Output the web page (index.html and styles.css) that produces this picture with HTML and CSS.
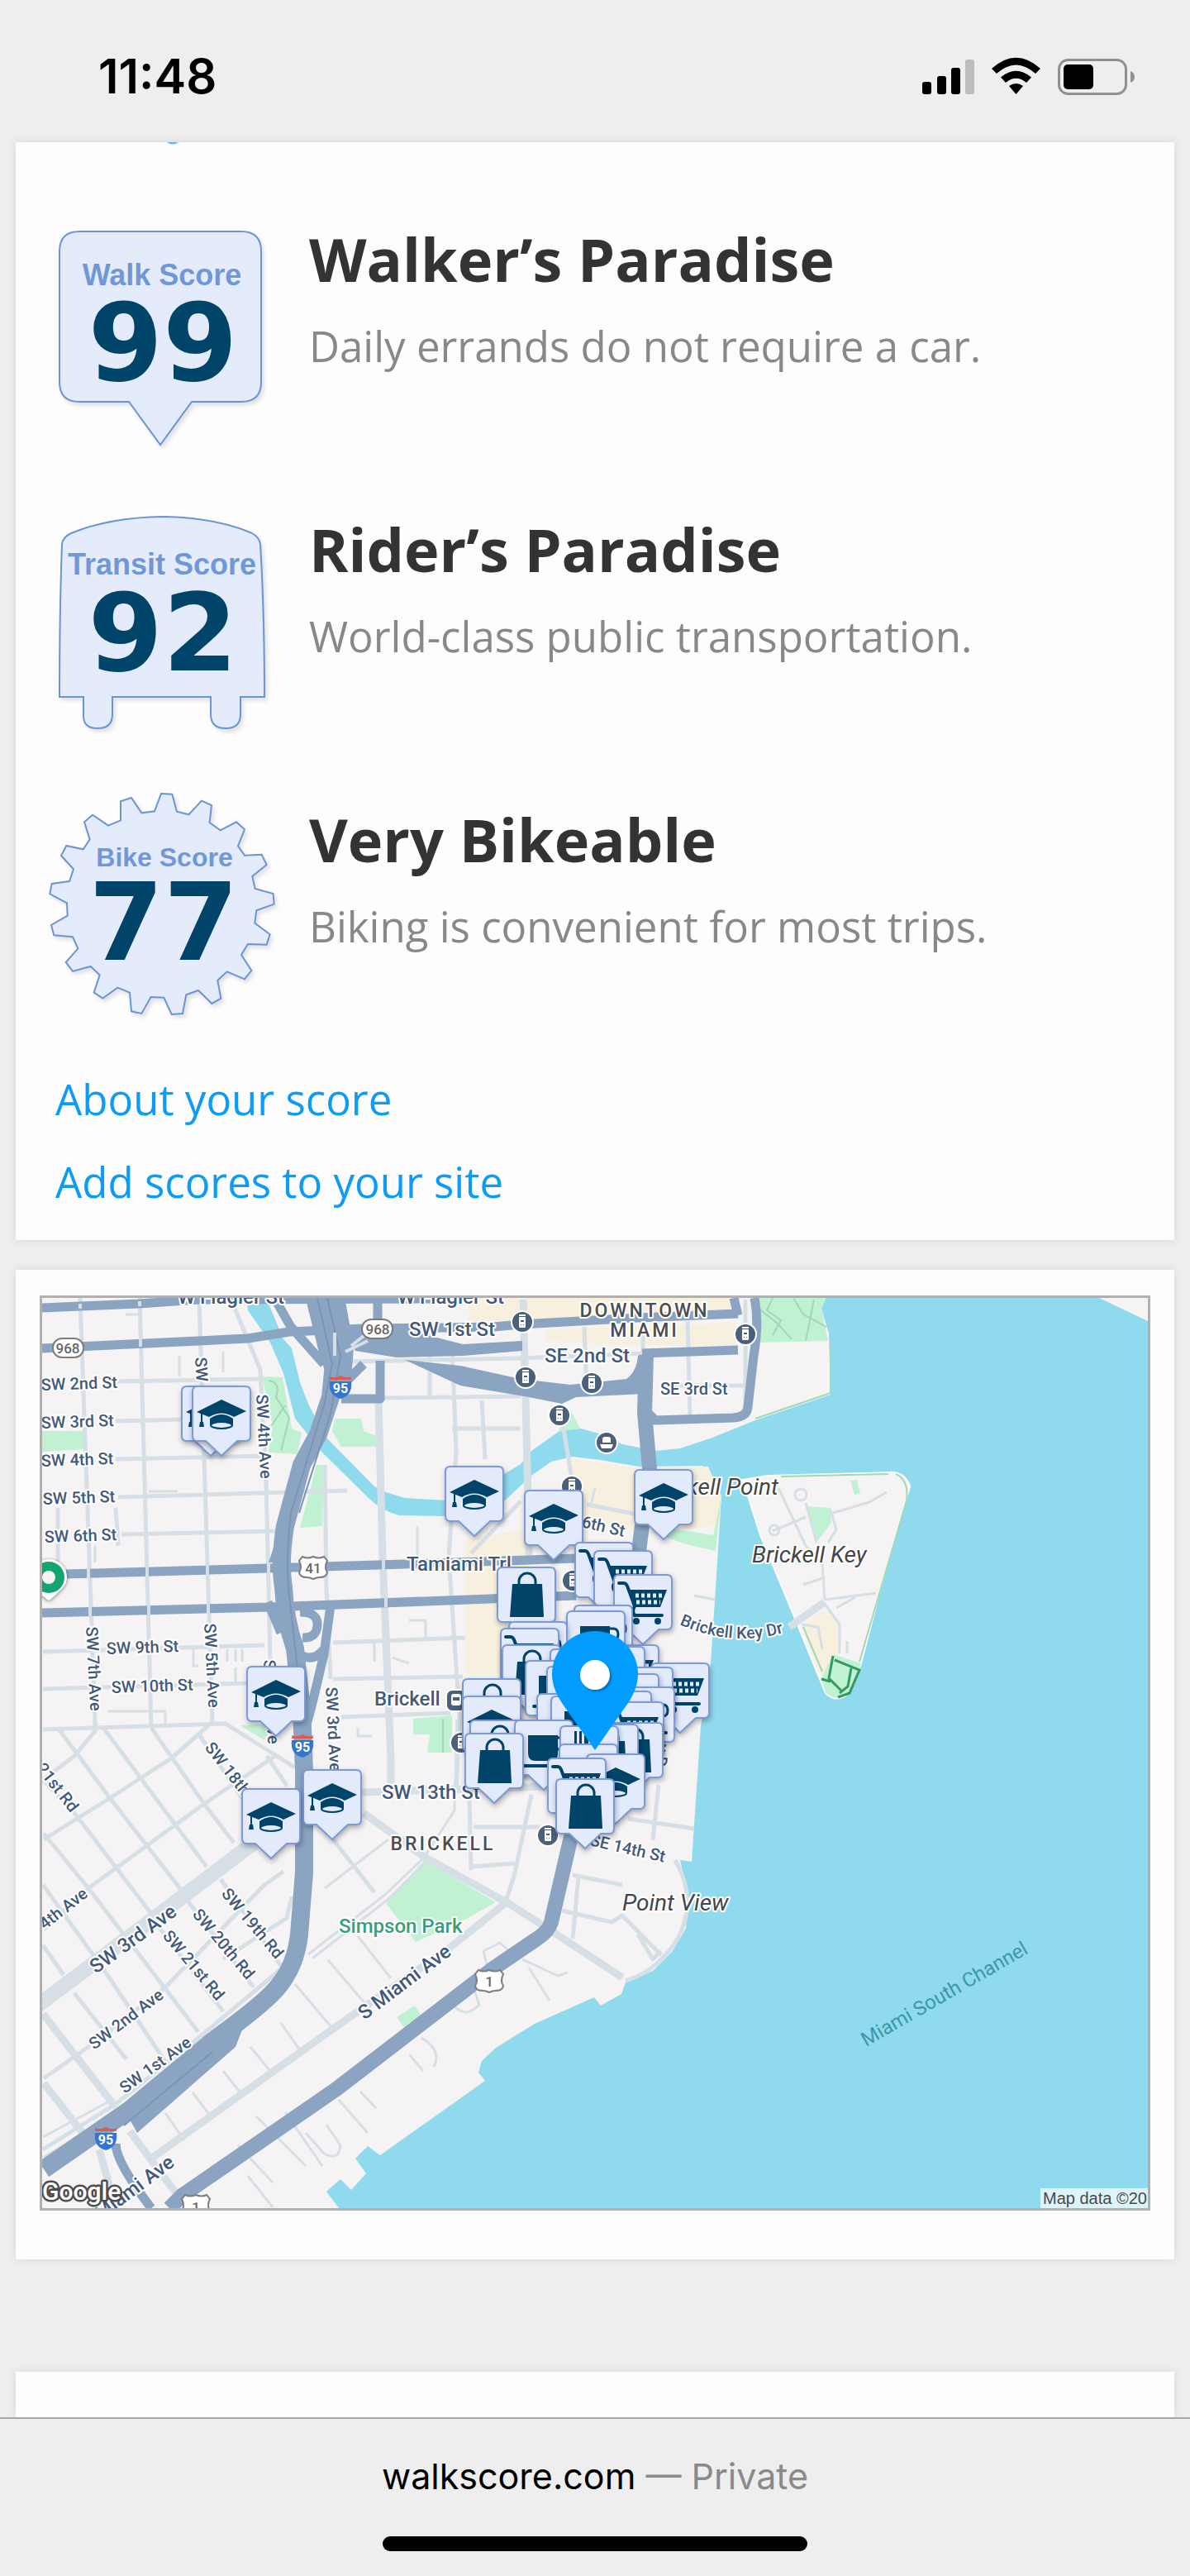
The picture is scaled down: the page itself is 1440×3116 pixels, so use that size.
FILE: index.html
```html
<!DOCTYPE html>
<html lang="en">
<head>
    <meta charset="UTF-8">
    <meta name="viewport" content="width=device-width, initial-scale=1.0">
    <title>Walk Score</title>
    <link rel="stylesheet" href="styles.css">
</head>
<body>
    <header class="status-bar">
        <time class="clock">11:48</time>
        <div class="status-icons">
            <svg width="64" height="46" viewBox="1116 67 64 46" role="img" aria-label="Signal">
                <rect x="1116" y="97" width="11" height="15" rx="3"/>
                <rect x="1134" y="90" width="11" height="22" rx="3"/>
                <rect x="1151" y="80" width="11" height="32" rx="3"/>
                <rect class="dim" x="1168" y="70" width="11" height="42" rx="3"/>
            </svg>
            <svg width="60" height="46" viewBox="1200 67 60 46" role="img" aria-label="Wi-Fi">
                <path d="M1200 81Q1229.500 54.500 1259 81L1253 87Q1229.500 66 1206 87Z"/>
                <path d="M1211 91.500Q1229.500 76 1248 91.500L1242 98Q1229.500 87.500 1217 98Z"/>
                <path d="M1221 102Q1229.500 96 1238 102L1229.500 112Z"/>
            </svg>
            <svg width="94" height="46" viewBox="1280 67 94 46" role="img" aria-label="Battery">
                <rect class="battery-shell" x="1281.500" y="70.500" width="81" height="41" rx="11"/>
                <rect x="1287" y="76" width="36" height="30" rx="5"/>
                <path class="battery-tip" d="M1368 84Q1373 86 1373 91T1368 98Z"/>
            </svg>
        </div>
    </header>

    <main>
        <section class="card scores">
            <svg class="cut-off" width="16" height="4" viewBox="0 0 16 4" aria-hidden="true">
                <path d="M1 0Q8 5 15 0Z"/>
            </svg>

            <article class="score">
                <svg class="badge" viewBox="48 248 300 300">
                    <path class="badge-shape" d="M96 280H292Q316 280 316 304V462Q316 486 292 486H232L194 538L156 486H96Q72 486 72 462V304Q72 280 96 280Z"/>
                    <text class="badge-name" x="196" y="345">Walk Score</text>
                    <text class="badge-value" x="197" y="460">99</text>
                </svg>
                <div class="score-text">
                    <h2>Walker’s Paradise</h2>
                    <p>Daily errands do not require a car.</p>
                </div>
            </article>

            <article class="score">
                <svg class="badge" viewBox="48 599 300 300">
                    <path class="badge-shape" d="M75 658Q76 650 86 645Q132 626 197 625Q262 626 305 645Q314 650 315 658Q320 740 320 843H291V864Q291 881 273 881T255 864V843H136V864Q136 881 118 881T101 864V843H72Q72 740 75 658Z"/>
                    <text class="badge-name" x="196" y="695">Transit Score</text>
                    <text class="badge-value" x="197" y="811">92</text>
                </svg>
                <div class="score-text">
                    <h2>Rider’s Paradise</h2>
                    <p>World-class public transportation.</p>
                </div>
            </article>

            <article class="score">
                <svg class="badge" viewBox="48 950 300 300">
                    <g transform="translate(40 940) scale(.3333)">
                        <polygon class="badge-shape gear" points="465,60 505,62 522,125 565,136 612,86 648,102 641,165 680,193 738,163 768,190 744,250 768,284 830,281 848,318 796,360 806,405 872,423 875,461 811,484 805,530 860,571 848,608 780,606 756,645 793,702 768,733 704,706 670,738 682,803 649,822 600,774 556,790 543,858 503,861 475,800 428,798 394,858 357,850 351,782 307,764 253,803 221,782 242,718 209,687 144,705 119,672 163,622 144,580 76,574 66,537 125,503 123,457 61,424 68,387 132,378 147,334 102,285 121,249 182,262 206,226 186,163 216,137 273,176 318,157 318,88 357,75 394,130 441,124"/>
                    </g>
                    <text class="badge-name small" x="199" y="1048">Bike Score</text>
                    <text class="badge-value" x="198" y="1161">77</text>
                </svg>
                <div class="score-text">
                    <h2>Very Bikeable</h2>
                    <p>Biking is convenient for most trips.</p>
                </div>
            </article>

            <nav class="score-links">
                <a href="#about">About your score</a>
                <a href="#add">Add scores to your site</a>
            </nav>
        </section>

        <section class="card map-card">
            <svg class="map" viewBox="51 1570 1338 1101" role="img" aria-label="Map of Brickell, Miami">
                <defs>
                    <path id="pin" class="pin" d="M-29 -84H29Q35 -84 35 -78V-24Q35 -18 29 -18H19L0 0L-19 -18H-29Q-35 -18 -35 -24V-78Q-35 -84 -29 -84Z"/>
                    <g id="school">
                        <use href="#pin"/>
                        <path class="ink" d="M-30 -53L0 -68L30 -54L15 -47Q0 -56 -15 -47Z"/>
                        <path class="ink" d="M-14 -45Q0 -55 14 -45V-37H-14Z"/>
                        <ellipse class="cap-rim" cx="0" cy="-37" rx="13" ry="4"/>
                        <path class="thin-ink" d="M-24 -52V-40"/>
                        <path class="ink" d="M-26 -41H-22L-21 -35H-27Z"/>
                    </g>
                    <g id="bag">
                        <use href="#pin"/>
                        <path class="ink" d="M-17 -64H19L21 -24H-20Z"/>
                        <path class="ink-line" d="M-9 -63V-67A10 10 0 0 1 11 -67V-63"/>
                    </g>
                    <g id="cart">
                        <use href="#pin"/>
                        <path class="handle" d="M-29 -74H-23Q-20 -74 -18 -68L-10 -46Q-14 -40 -10 -35H23"/>
                        <path class="ink" d="M-18 -66H29L21 -45H-11Z"/>
                        <path class="holes" d="M-9 -59H23M-8 -51H21"/>
                        <circle class="ink" cx="18" cy="-28" r="4"/>
                        <circle class="ink" cx="-8" cy="-28" r="4"/>
                    </g>
                    <g id="mug">
                        <use href="#pin"/>
                        <path class="ink" d="M-19 -66H17V-44Q17 -35 8 -35H-10Q-19 -35 -19 -44Z"/>
                        <path class="ink-line" d="M17 -63H21Q27 -63 27 -56T21 -49H17"/>
                        <path class="handle" d="M-25 -29H25"/>
                    </g>
                    <g id="bank">
                        <use href="#pin"/>
                        <path class="ink" d="M-18 -78H-15V-58H-18ZM-12 -78H-9V-58H-12ZM-6 -78H-1V-58H-6ZM3 -78H6V-58H3ZM9 -78H12V-58H9Z"/>
                    </g>
                    <g id="station">
                        <circle class="poi" r="13"/>
                        <rect class="poi-mark" x="-4" y="-6" width="8" height="13" rx="1"/>
                        <path class="poi-line" d="M-4 -8H4"/>
                        <path class="poi-cut" d="M-2 -2H2V0H-2ZM-2 3H-1V4H-2ZM1 3H2V4H1Z"/>
                    </g>
                    <g id="i95">
                        <path class="shield-blue" d="M-13 -7H13Q15 10 0 14Q-15 10 -13 -7Z"/>
                        <path class="shield-red" d="M-13 -9Q-12 -12 -13 -13Q-6 -10 0 -14Q6 -10 13 -13Q12 -12 13 -9Z"/>
                        <text class="shield-text light" y="7">95</text>
                    </g>
                    <path id="us" class="shield-white" d="M-13 -13Q-7 -10 0 -13Q7 -10 13 -13L17 -8Q13 0 17 6Q16 12 8 12Q4 12 0 14Q-4 12 -8 12Q-16 12 -17 6Q-13 0 -17 -8Z"/>
                    <path id="key-drive" d="M822 1965Q890 1995 958 1972"/>
                </defs>

                <rect class="land" x="51" y="1570" width="1338" height="1101"/>

                <!-- commercial blocks -->
                <path class="blocks" d="M567 1570H887V1590L780 1594L567 1598ZM660 1608L890 1600V1628H780L660 1622ZM563 1862L640 1850V2025H563ZM690 1764L770 1776L765 1850L700 1835Z"/>

                <!-- bay and river -->
                <path class="water" d="M999 1570L994 1583L1003 1613L1005 1687L914 1718L862 1739L823 1752L794 1755L753 1747L728 1735L703 1728L677 1731L643 1755L630 1771L610 1783L580 1805L540 1815L490 1812L467 1805L453 1798L393 1737L373 1698L363 1672L353 1631L343 1620L322 1570H298L300 1585L327 1624L343 1661L357 1716L390 1757L447 1813Q463 1828 483 1833L540 1834L580 1830L610 1816L643 1785L667 1768L693 1762L727 1766L773 1774L850 1773L873 1809L867 1905L860 2012L848 2088L837 2252L823 2250L832 2290L830 2333L813 2361L790 2384L757 2398L752 2412L727 2426L719 2416L647 2448L600 2477L583 2493L579 2507L587 2517L460 2607L445 2596L430 2611L443 2629L425 2649L412 2636L395 2651L410 2671H1389V1598L1330 1570Z"/>
                <path class="land island" d="M899 1790L929 1785L1080 1781Q1096 1782 1101 1798L1062 1935L1042 2012L1029 2046Q1014 2062 999 2048L951 1931L920 1857Z"/>
                <path class="blocks" d="M797 1776L857 1774L872 1809L868 1846L827 1850L797 1845ZM970 1964L1003 1946L1014 1961L1016 2001L1003 2031L990 2022Z"/>

                <!-- parks -->
                <path class="park" d="M916 1570H998L994 1583L1002 1622L918 1624ZM317 1665L342 1666L353 1728L365 1733L360 1759L325 1757L330 1724ZM405 1716H437L440 1731L455 1737V1750H413L402 1731ZM383 1772H392L390 1846L363 1848ZM51 1731H102V1753L51 1756ZM290 2087L330 2085L320 2105ZM500 2079L547 2075V2120H517L520 2098H500ZM513 2250L600 2301L557 2325L503 2349L467 2302ZM480 2440L502 2426L513 2443L493 2458ZM787 1853L820 1850L863 1857L873 1809L866 1876L830 1868ZM690 1705L702 1728L675 1732ZM975 1822L1005 1824L1006 1842L988 1866ZM1029 1791L1037 1790L1041 1807L1034 1808ZM1008 2001L1042 2012L1029 2046Q1014 2060 999 2048L994 2030Z"/>
                <path class="park-path" d="M918 1583L940 1600L958 1620M935 1570L928 1585L945 1597L935 1615M960 1570L972 1590L1000 1605M985 1572L975 1622M325 1670Q340 1672 334 1690L350 1715L340 1755M328 1725L345 1700M536 2079V2120"/>
                <path class="trail" d="M1008 2003L1003 2030L1018 2045M1010 2008L1040 2020L1028 2048L1014 2053M1030 2018L1026 2040L1016 2048M994 2031L1005 2034"/>
                <path class="coast" d="M1005 1625V1685L914 1716M1084 1783Q1100 1790 1097 1815L1040 2010M945 1786L1075 1783M972 1968L995 2022"/>

                <!-- local streets -->
                <path class="street" d="M97 1570L115 2083M169 1570L183 2090M241 1570L257 2083M283 1580L315 1657L322 1790L327 2009M393 1772L395 1920L400 2031M70 1824V1890M140 1824L143 1870M140 1671L313 1668M140 1719L220 1717M140 1765L323 1761M143 1811L420 1803M147 1856L337 1852M52 1998L320 1990M52 2043L300 2036M52 2092L273 2085L357 2138M403 1987L563 1981M403 2031L560 2028M413 2077L545 2072M423 1647L630 1643L778 1637M463 1691L630 1689M547 1624L552 1757L543 1883L553 2031L556 2075L552 2170M520 1600V1690M707 1605L710 1685M778 1598V1640M832 1598L835 1713M902 1572V1702M583 1694L587 1765M680 1716L692 1790M710 1820L767 1831M630 1816L570 1879M547 1728H630M800 1676H902"/>
                <path class="street" d="M52 2153L90 2124L115 2094V2083M53 2225L133 2175L207 2127L240 2098L257 2083M53 2334L107 2284L140 2260L247 2182L333 2124M53 2514L107 2476L200 2404L320 2280L343 2264M52 2600L140 2545L240 2465L340 2382M52 2353L77 2389M52 2280L130 2389L200 2494M53 2218L107 2284L240 2458M52 2153L90 2193L187 2320M70 2090L133 2175L220 2287M125 2090L250 2258M183 2090L247 2182L283 2229M240 2097L293 2175M323 2124L347 2160M267 2273L340 2378M223 2294L307 2404M187 2324L270 2433M90 2411L153 2491M403 2225L453 2289M353 2294L347 2320L270 2370M568 2171L570 2262M643 2171L623 2266L613 2297M573 2210H653M570 2258L623 2254M817 2250Q845 2300 820 2345Q795 2385 757 2396M693 2268L753 2280M680 2311L740 2325L753 2317L800 2365M700 2270L693 2345M797 2159L790 2226M760 2200L840 2212M772 2340L790 2370L800 2360"/>
                <path class="lane" d="M357 2400L400 2451M340 2447L363 2480M303 2476L327 2505M270 2505L293 2534M233 2531L257 2563M200 2556L223 2589M397 2371L443 2425M433 2342L473 2393M393 2284L470 2225M373 2364L467 2291L513 2247L550 2190L553 2080M378 2369L470 2297L518 2250M52 2585L130 2543M52 2610L140 2556M585 2360L605 2350L618 2362L590 2380ZM545 2420Q560 2445 580 2425L573 2405M495 2485L512 2505M510 2465Q535 2480 525 2500M632 2370L675 2390L687 2386M640 2380L665 2420M410 2540L445 2580M436 2530L455 2550M345 2555L390 2620M288 2595L330 2640M310 2560L370 2620M370 2580L392 2605Q410 2615 412 2595L395 2570M300 2632L330 2670M152 1590H168M217 1640V1665M270 1635V1660M180 1804H215M115 1870V1890M234 1995V2015L240 2015M275 1995V2010M285 1995V2010M293 1995V2010M285 2017V2035M505 1846V1900M495 1960H515V1980M453 1987V2010M475 2005L495 2012M433 2090V2100H450M130 2070H200V2090M720 1800L715 1820"/>
                <path class="lane" d="M942 1800L975 1870L995 1890L998 1935M935 1852L975 1835M975 1818L988 1866M1005 1826L1012 1850L1002 1866M1008 1830L1052 1817L1073 1805M998 1935L1060 1927M972 1917L998 1908M998 1940L1016 1965V2000M1012 1945L1035 1932M970 1965L990 1968L995 1995M1025 1985V2000M840 1930L865 1935"/>
                <circle class="lane" cx="937" cy="1851" r="6"/>
                <circle class="lane" cx="969" cy="1808" r="7"/>
                <path class="avenue" d="M458 1694L463 1883L473 2130V2170M633 1572L638 1772L640 1883M437 2168L660 2161M440 2193L513 2246L613 2301L657 2329L753 2392M183 2611L423 2440L543 2357L613 2301M52 2436L140 2549M53 2520L107 2589M157 2578L217 2658M120 2600L140 2671M955 1968L998 1938"/>
                <path class="boulevard" d="M40 2430L187 2320L307 2229"/>

                <!-- main roads -->
                <path class="road" d="M51 1582L168 1577L240 1572L540 1571M51 1631L240 1622L300 1619L350 1611L440 1607L540 1606L597 1605L630 1602L773 1594L893 1589M80 1904L323 1897L490 1892L697 1885M51 1951L327 1944L540 1936L697 1930M332 1570L352 1605L392 1650M413 1692H460V1646M457 1570V1607M777 1637L893 1633M913 1570Q919 1600 912 1640L905 1702Q904 1714 887 1715L793 1718L775 1700M888 1570L893 1591M140 2593Q140 2615 183 2671M324 1938L340 1975M400 1942L392 2001L377 2064L368 2097M363 1950Q385 1950 384 1966T366 1981M366 2003Q380 2010 392 1995M410 1680L440 1650"/>
                <path class="freeway" d="M405 1640L400 1690L385 1735L365 1772L345 1846Q338 1890 343 1920Q345 1960 357 1994L365 2068L368 2142V2265L362 2340Q358 2378 335 2405Q318 2425 257 2469L157 2552L53 2624"/>
                <path class="freeway-north" d="M382 1570L398 1635L408 1665M405 1570L416 1630L412 1680"/>
                <path class="road-fill" d="M262 2466L235 2482L148 2548L166 2580L285 2476L295 2450ZM415 1608L490 1608L560 1626L632 1622V1634L560 1640L480 1642L430 1634ZM490 1645L557 1652L630 1668L690 1675L780 1666V1686L697 1690L680 1698L640 1690L557 1676ZM325 1890L345 1830L352 1890ZM780 1640V1670L750 1672Q770 1665 772 1640Z"/>
                <path class="seam" d="M384 1570L402 1650L392 1700L352 1830Q345 1890 350 1930L367 2080M396 1570L412 1640L400 1710L362 1830M150 2571L257 2482"/>
                <path class="brickell" d="M782 1639L780 1709L786 1776L773 1876L720 2100L690 2226L667 2325Q664 2336 650 2345L597 2381L407 2527L220 2656L205 2671"/>
                <path class="overpass" d="M405 1612V1640M418 1635L445 1622M425 1628L445 1612M97 1577V1583M98 1623V1633M169 1574V1580M170 1619V1629M107 1896V1909M178 1894V1907M251 1892V1905M325 1890V1903M109 1943V1956M180 1941V1953M252 1939V1952M464 1885V1899M467 1930V1944"/>

                <!-- transit -->
                <use href="#station" x="632" y="1599"/>
                <use href="#station" x="902" y="1614"/>
                <use href="#station" x="636" y="1666"/>
                <use href="#station" x="716" y="1673"/>
                <use href="#station" x="677" y="1712"/>
                <use href="#station" x="692" y="1798"/>
                <use href="#station" x="693" y="1912"/>
                <use href="#station" x="663" y="2220"/>
                <use href="#station" x="558" y="2108"/>
                <g transform="translate(734 1745)">
                    <circle class="poi" r="13"/>
                    <path class="poi-mark" d="M-8 2H8L6 7H-6ZM-5 0V-4Q-5 -7 -2 -7H2Q5 -7 5 -4V0Z"/>
                </g>
                <g transform="translate(552 2057)">
                    <rect class="poi" x="-12" y="-13" width="24" height="26" rx="7"/>
                    <rect class="poi-mark" x="-6" y="-8" width="12" height="14" rx="3"/>
                    <path class="poi-cut" d="M-4 -4H4V0H-4Z"/>
                </g>
                <g transform="translate(59 1908)">
                    <path class="green-pin-edge" d="M-22 0A22 22 0 1 1 22 0Q22 8 15 15L2 27Q0 28 -2 27L-15 15Q-22 8 -22 0Z"/>
                    <circle class="green-pin" r="19"/>
                    <circle class="land" r="8"/>
                </g>

                <!-- route shields -->
                <rect class="shield-white" x="64" y="1619" width="37" height="23" rx="11"/>
                <text class="shield-text" x="82" y="1637">968</text>
                <rect class="shield-white" x="438" y="1596" width="37" height="23" rx="11"/>
                <text class="shield-text" x="457" y="1614">968</text>
                <use href="#us" x="379" y="1896"/>
                <text class="shield-text" x="379" y="1903">41</text>
                <use href="#us" x="592" y="2396"/>
                <text class="shield-text" x="592" y="2403">1</text>
                <use href="#us" x="237" y="2668"/>
                <text class="shield-text" x="237" y="2676">1</text>
                <use href="#i95" x="412" y="1678"/>
                <use href="#i95" x="366" y="2112"/>
                <use href="#i95" x="128" y="2587"/>

                <!-- labels -->
                <g class="label">
                    <text transform="translate(50 1682) rotate(-2)">SW 2nd St</text>
                    <text transform="translate(50 1728) rotate(-2)">SW 3rd St</text>
                    <text transform="translate(50 1774) rotate(-2)">SW 4th St</text>
                    <text transform="translate(52 1820) rotate(-2)">SW 5th St</text>
                    <text transform="translate(54 1866) rotate(-2)">SW 6th St</text>
                    <text transform="translate(129 2001) rotate(-2)">SW 9th St</text>
                    <text transform="translate(135 2048) rotate(-2)">SW 10th St</text>
                    <text transform="translate(104 1968) rotate(87)">SW 7th Ave</text>
                    <text transform="translate(247 1964) rotate(87)">SW 5th Ave</text>
                    <text transform="translate(310 1687) rotate(87)">SW 4th Ave</text>
                    <text transform="translate(236 1642) rotate(87)">SW 5th Ave</text>
                    <text transform="translate(319 2008) rotate(87)">SW 4th Ave</text>
                    <text transform="translate(394 2041) rotate(87)">SW 3rd Ave</text>
                    <text transform="translate(247 2114) rotate(52)">SW 18th Rd</text>
                    <text transform="translate(22 2112) rotate(52)">SW 21st Rd</text>
                    <text transform="translate(267 2291) rotate(50)">SW 19th Rd</text>
                    <text transform="translate(232 2316) rotate(50)">SW 20th Rd</text>
                    <text transform="translate(196 2342) rotate(50)">SW 21st Rd</text>
                    <text transform="translate(27 2356) rotate(-38)">SW 4th Ave</text>
                    <text transform="translate(114 2480) rotate(-37)">SW 2nd Ave</text>
                    <text transform="translate(151 2533) rotate(-36)">SW 1st Ave</text>
                    <text x="799" y="1687">SE 3rd St</text>
                    <text transform="translate(703 1847) rotate(13)">6th St</text>
                    <text transform="translate(713 2232) rotate(13)">SE 14th St</text>
                    <text transform="translate(797 2098) rotate(97)">ay Dr</text>
                    <text><textPath href="#key-drive">Brickell Key Dr</textPath></text>
                </g>
                <g class="label big">
                    <text x="215" y="1577">W Flagler St</text>
                    <text x="481" y="1577">W Flagler St</text>
                    <text x="495" y="1616">SW 1st St</text>
                    <text x="659" y="1648">SE 2nd St</text>
                    <text x="492" y="1900">Tamiami Trl</text>
                    <text x="453" y="2063">Brickell</text>
                    <text x="462" y="2176">SW 13th St</text>
                    <text transform="translate(116 2388) rotate(-36)">SW 3rd Ave</text>
                    <text transform="translate(441 2444) rotate(-37)">S Miami Ave</text>
                    <text transform="translate(106 2699) rotate(-37)">S Miami Ave</text>
                </g>
                <g class="label district">
                    <text x="780" y="1593">DOWNTOWN</text>
                    <text x="780" y="1617">MIAMI</text>
                    <text x="536" y="2238">BRICKELL</text>
                </g>
                <g class="label place">
                    <text x="942" y="1808" text-anchor="end">Brickell Point</text>
                    <text x="910" y="1890">Brickell Key</text>
                    <text x="753" y="2311">Point View</text>
                </g>
                <text class="label park-name" x="410" y="2338">Simpson Park</text>
                <text class="water-name" transform="translate(1048 2476) rotate(-30)">Miami South Channel</text>

                <!-- nearby places, north to south -->
                <use href="#school" x="255" y="1761"/>
                <use href="#school" x="268" y="1761"/>
                <use href="#school" x="574" y="1858"/>
                <use href="#school" x="803" y="1862"/>
                <use href="#school" x="670" y="1887"/>
                <use href="#cart" x="731" y="1950"/>
                <use href="#cart" x="754" y="1960"/>
                <use href="#bag" x="637" y="1980"/>
                <use href="#cart" x="778" y="1989"/>
                <use href="#mug" x="730" y="2026"/>
                <use href="#mug" x="721" y="2033"/>
                <use href="#mug" x="651" y="2046"/>
                <use href="#cart" x="641" y="2054"/>
                <use href="#bag" x="643" y="2074"/>
                <use href="#cart" x="762" y="2074"/>
                <use href="#pin" x="745" y="2076"/>
                <use href="#pin" x="701" y="2079"/>
                <use href="#mug" x="671" y="2093"/>
                <use href="#cart" x="823" y="2096"/>
                <use href="#school" x="334" y="2100"/>
                <use href="#pin" x="697" y="2100"/>
                <use href="#pin" x="779" y="2101"/>
                <use href="#pin" x="762" y="2109"/>
                <use href="#bag" x="595" y="2115"/>
                <use href="#mug" x="781" y="2125"/>
                <use href="#pin" x="753" y="2130"/>
                <use href="#pin" x="685" y="2133"/>
                <use href="#mug" x="702" y="2136"/>
                <use href="#school" x="595" y="2136"/>
                <use href="#cart" x="768" y="2143"/>
                <use href="#bag" x="604" y="2165"/>
                <use href="#mug" x="658" y="2165"/>
                <use href="#bag" x="767" y="2168"/>
                <use href="#bag" x="737" y="2170"/>
                <use href="#bank" x="713" y="2172"/>
                <use href="#bag" x="598" y="2181"/>
                <use href="#pin" x="712" y="2194"/>
                <use href="#school" x="745" y="2206"/>
                <use href="#cart" x="698" y="2211"/>
                <use href="#school" x="402" y="2225"/>
                <use href="#bag" x="708" y="2236"/>
                <use href="#school" x="328" y="2248"/>

                <!-- searched address -->
                <path class="home-pin" d="M720 2117L680 2060Q668 2042 668 2025A52 52 0 0 1 772 2025Q772 2042 760 2060Z"/>
                <circle class="home-dot" cx="720" cy="2026" r="18"/>

                <text class="google" x="51" y="2661">Google</text>
                <rect class="credit-back" x="1259" y="2647" width="130" height="24"/>
                <text class="credit" x="1262" y="2666">Map data ©20</text>
            </svg>
        </section>

        <section class="card next-card"></section>
    </main>

    <footer class="toolbar">
        <button class="address" type="button">walkscore.com <span>— Private</span></button>
        <div class="home-bar"></div>
    </footer>
</body>
</html>
```
FILE: styles.css
```css
* {
    box-sizing: border-box;
}

body {
    background-color: #eeeeee;
    color: #333333;
    font-family: "Open Sans", "Noto Sans", sans-serif;
    margin: 0;
}

/* Status bar */
.status-bar {
    display: flex;
    align-items: center;
    justify-content: space-between;
    height: 172px;
    padding: 12px 66px 0 119px;
}

.clock {
    color: #000000;
    font-family: Inter, sans-serif;
    font-size: 58px;
    font-weight: 600;
}

.status-icons {
    display: flex;
    gap: 20px;
}

.status-icons .dim {
    fill: #bdbdbd;
}

.battery-shell {
    fill: none;
    stroke: #909090;
    stroke-width: 3;
}

.battery-tip {
    fill: #909090;
}

/* Cards */
.card {
    background-color: #fdfdfd;
    box-shadow: 0 0 10px rgba(0, 0, 0, 0.1);
    margin: 0 19px;
}

.scores {
    position: relative;
    display: flex;
    flex-direction: column;
    gap: 51px;
    padding: 76px 29px 21px;
}

.cut-off {
    position: absolute;
    top: 0;
    left: 182px;
    fill: #6ab4ee;
}

.score {
    display: flex;
    gap: 26px;
}

.badge {
    flex: none;
    width: 300px;
    height: 300px;
}

.badge-shape {
    fill: #e4ecfb;
    stroke: #6b94d4;
    stroke-width: 2;
    filter: drop-shadow(3px 4px 2px rgba(0, 0, 0, 0.1));
}

.gear {
    stroke-width: 6;
    filter: drop-shadow(9px 12px 6px rgba(0, 0, 0, 0.1));
}

.badge-name {
    fill: #7098d8;
    font-family: "Liberation Sans", sans-serif;
    font-size: 36px;
    font-weight: bold;
    text-anchor: middle;
}

.badge-name.small {
    font-size: 32px;
}

.badge-value {
    fill: #00446a;
    font-family: "DejaVu Sans", sans-serif;
    font-size: 130px;
    font-weight: bold;
    text-anchor: middle;
}

.score-text {
    padding-top: 21px;
}

.score h2 {
    font-size: 72px;
    line-height: 88px;
    margin: 0 0 27px;
}

.score p {
    color: #888888;
    font-size: 51px;
    line-height: 68px;
    margin: 0;
}

.score-links {
    display: flex;
    flex-direction: column;
    align-items: flex-start;
    margin-top: -22px;
    padding-left: 19px;
}

.score-links a {
    color: #0c9bf5;
    font-size: 51px;
    line-height: 100px;
    text-decoration: none;
}

.map-card {
    margin-top: 36px;
    padding: 31px 29px 59px;
}

.next-card {
    height: 55px;
    margin-top: 136px;
}

/* Map */
.map {
    display: block;
    width: 100%;
    height: auto;
    border: 3px solid #b0b0b0;
    font-family: Roboto, sans-serif;
}

.land {
    fill: #f5f3f4;
}

.island {
    stroke: #ffffff;
    stroke-width: 2;
}

.blocks {
    fill: #f8f0de;
}

.water {
    fill: #90daee;
}

.park {
    fill: #c1f1d3;
}

.park-path, .coast {
    fill: none;
    stroke: #9fdab4;
    stroke-width: 2;
}

.trail {
    fill: none;
    stroke: #359a62;
    stroke-width: 3;
}

.street, .lane, .avenue, .boulevard {
    fill: none;
    stroke: #d6dfe6;
    stroke-width: 5;
    stroke-linejoin: round;
}

.lane {
    stroke-width: 3;
}

.avenue {
    stroke-width: 9;
}

.boulevard {
    stroke-width: 18;
}

.road, .freeway, .freeway-north, .brickell, .seam, .overpass {
    fill: none;
    stroke: #8aa4c2;
    stroke-width: 11;
    stroke-linejoin: round;
}

.freeway {
    stroke-width: 22;
}

.freeway-north {
    stroke-width: 24;
}

.brickell {
    stroke-width: 18;
}

.seam {
    stroke: #7a94b5;
    stroke-width: 2;
}

.overpass {
    stroke: #d6dfe6;
    stroke-width: 4;
}

.road-fill {
    fill: #8aa4c2;
}

.poi {
    fill: #4c6079;
    stroke: #ffffff;
    stroke-width: 2;
}

.poi-mark {
    fill: #ffffff;
}

.poi-cut {
    fill: #4c6079;
}

.poi-line {
    stroke: #ffffff;
    stroke-width: 2;
}

.green-pin {
    fill: #14a56e;
}

.green-pin-edge {
    fill: #ffffff;
    filter: drop-shadow(0 1px 2px rgba(0, 0, 0, 0.5));
}

.shield-white {
    fill: #ffffff;
    stroke: #7d7d7d;
    stroke-width: 2;
}

.shield-blue {
    fill: #3475d2;
}

.shield-red {
    fill: #dc5a50;
}

.shield-text {
    fill: #666666;
    font-size: 17px;
    font-weight: 500;
    text-anchor: middle;
}

.shield-text.light {
    fill: #ffffff;
    font-size: 16px;
    font-weight: 700;
}

.label {
    fill: #43597a;
    stroke: #ffffff;
    stroke-width: 4;
    stroke-linejoin: round;
    paint-order: stroke;
    font-size: 20px;
    font-weight: 500;
}

.label.big {
    font-size: 24px;
}

.label.district {
    fill: #4a4d52;
    font-size: 23px;
    letter-spacing: 3px;
    text-anchor: middle;
}

.label.place {
    fill: #454545;
    font-size: 28px;
    font-style: italic;
    font-weight: 400;
}

.label.park-name {
    fill: #36a07a;
    font-size: 24px;
}

.water-name {
    fill: #3b98a9;
    font-size: 24px;
}

.pin {
    fill: #e3eafb;
    stroke: #7c9ad6;
    stroke-width: 2;
    filter: drop-shadow(1px 3px 3px rgba(0, 0, 0, 0.3));
}

.ink {
    fill: #00446a;
}

.ink-line, .thin-ink, .handle {
    fill: none;
    stroke: #00446a;
    stroke-width: 3;
}

.thin-ink {
    stroke-width: 2;
}

.handle {
    stroke-width: 4;
    stroke-linecap: round;
}

.holes {
    stroke: #e3eafb;
    stroke-width: 5;
    stroke-dasharray: 4 3;
}

.cap-rim {
    fill: #e3eafb;
    stroke: #00446a;
    stroke-width: 2;
}

.home-pin {
    fill: #009cff;
}

.home-dot {
    fill: #ffffff;
    filter: drop-shadow(2px 2px 1px rgba(0, 0, 0, 0.3));
}

.google {
    fill: #ffffff;
    stroke: #4d4d4d;
    stroke-width: 5;
    stroke-linejoin: round;
    paint-order: stroke;
    font-size: 30px;
    font-weight: 500;
}

.credit-back {
    fill: rgba(255, 255, 255, 0.7);
}

.credit {
    fill: #4a4a4a;
    font-family: "Liberation Sans", sans-serif;
    font-size: 20px;
}

/* Browser toolbar */
.toolbar {
    display: flex;
    flex-direction: column;
    align-items: center;
    gap: 43px;
    position: relative;
    height: 192px;
    border-top: 2px solid #a8a8a8;
    background-color: #eeeeee;
    padding-top: 39px;
}

.address {
    background: none;
    border: none;
    color: #000000;
    font-family: Inter, sans-serif;
    font-size: 43px;
    line-height: 60px;
    padding: 0;
}

.address span {
    color: #8a8a8a;
}

.home-bar {
    width: 514px;
    height: 18px;
    border-radius: 9px;
    background-color: #000000;
}
```
